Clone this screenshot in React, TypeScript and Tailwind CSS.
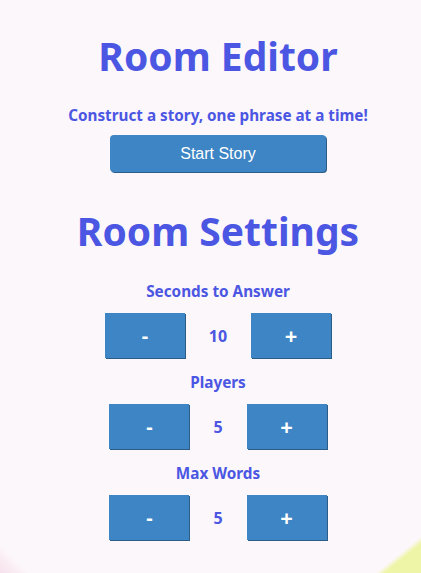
import { useState } from "react"

const Stepper = ({ label, value, onMinus, onPlus }: { label: string, value: number, onMinus: () => void, onPlus: () => void }) => {
  return (
    <div className="flex flex-col items-center">
      <p className="text-[15.3px] leading-[24px] font-bold text-[#4b56e3]">{label}</p>
      <div className="mt-[10px] flex items-center gap-6">
        <button onClick={onMinus} className="w-[80px] h-[45px] bg-[#3d85c4] shadow-[1px_1px_0_#2c5d88] text-white text-[20px] font-bold">-</button>
        <span className="text-[16px] font-bold text-[#4b56e3]">{value}</span>
        <button onClick={onPlus} className="w-[80px] h-[45px] bg-[#3d85c4] shadow-[1px_1px_0_#2c5d88] text-white text-[22px] font-bold">+</button>
      </div>
    </div>
  )
}

export default function App() {
  const [seconds, setSeconds] = useState(10)
  const [players, setPlayers] = useState(5)
  const [words, setWords] = useState(5)

  return (
    <div
      className="min-h-[573px] w-full pl-[15px] bg-[#fcf7fa] bg-[linear-gradient(141deg,transparent_96%,#eef5a6_96.8%),linear-gradient(225deg,transparent_97%,#f7e0ec_100%)] font-['Noto_Sans',sans-serif]"
    >
      <div className="flex flex-col items-center pt-[30px]">
        <h1 className="text-[39px] leading-[52px] font-bold text-[#4b56e3]">Room Editor</h1>

        <p className="mt-[21px] text-[15.25px] leading-[24px] font-bold text-[#4b56e3]">Construct a story, one phrase at a time!</p>

        <button className="mt-[8px] w-[216px] h-[37px] rounded-[4px] bg-[#3d85c4] shadow-[1px_1px_0_#2c5d88] text-white text-[16px] font-['Liberation_Sans',Arial,sans-serif]">
          Start Story
        </button>

        <h2 className="mt-[33px] text-[39px] leading-[52px] font-bold text-[#4b56e3]">Room Settings</h2>

        <div className="mt-[22px] flex flex-col items-center gap-[12px]">
          <Stepper label="Seconds to Answer" value={seconds} onMinus={() => setSeconds(s => s - 1)} onPlus={() => setSeconds(s => s + 1)} />
          <Stepper label="Players" value={players} onMinus={() => setPlayers(s => s - 1)} onPlus={() => setPlayers(s => s + 1)} />
          <Stepper label="Max Words" value={words} onMinus={() => setWords(s => s - 1)} onPlus={() => setWords(s => s + 1)} />
        </div>
      </div>
    </div>
  )
}
